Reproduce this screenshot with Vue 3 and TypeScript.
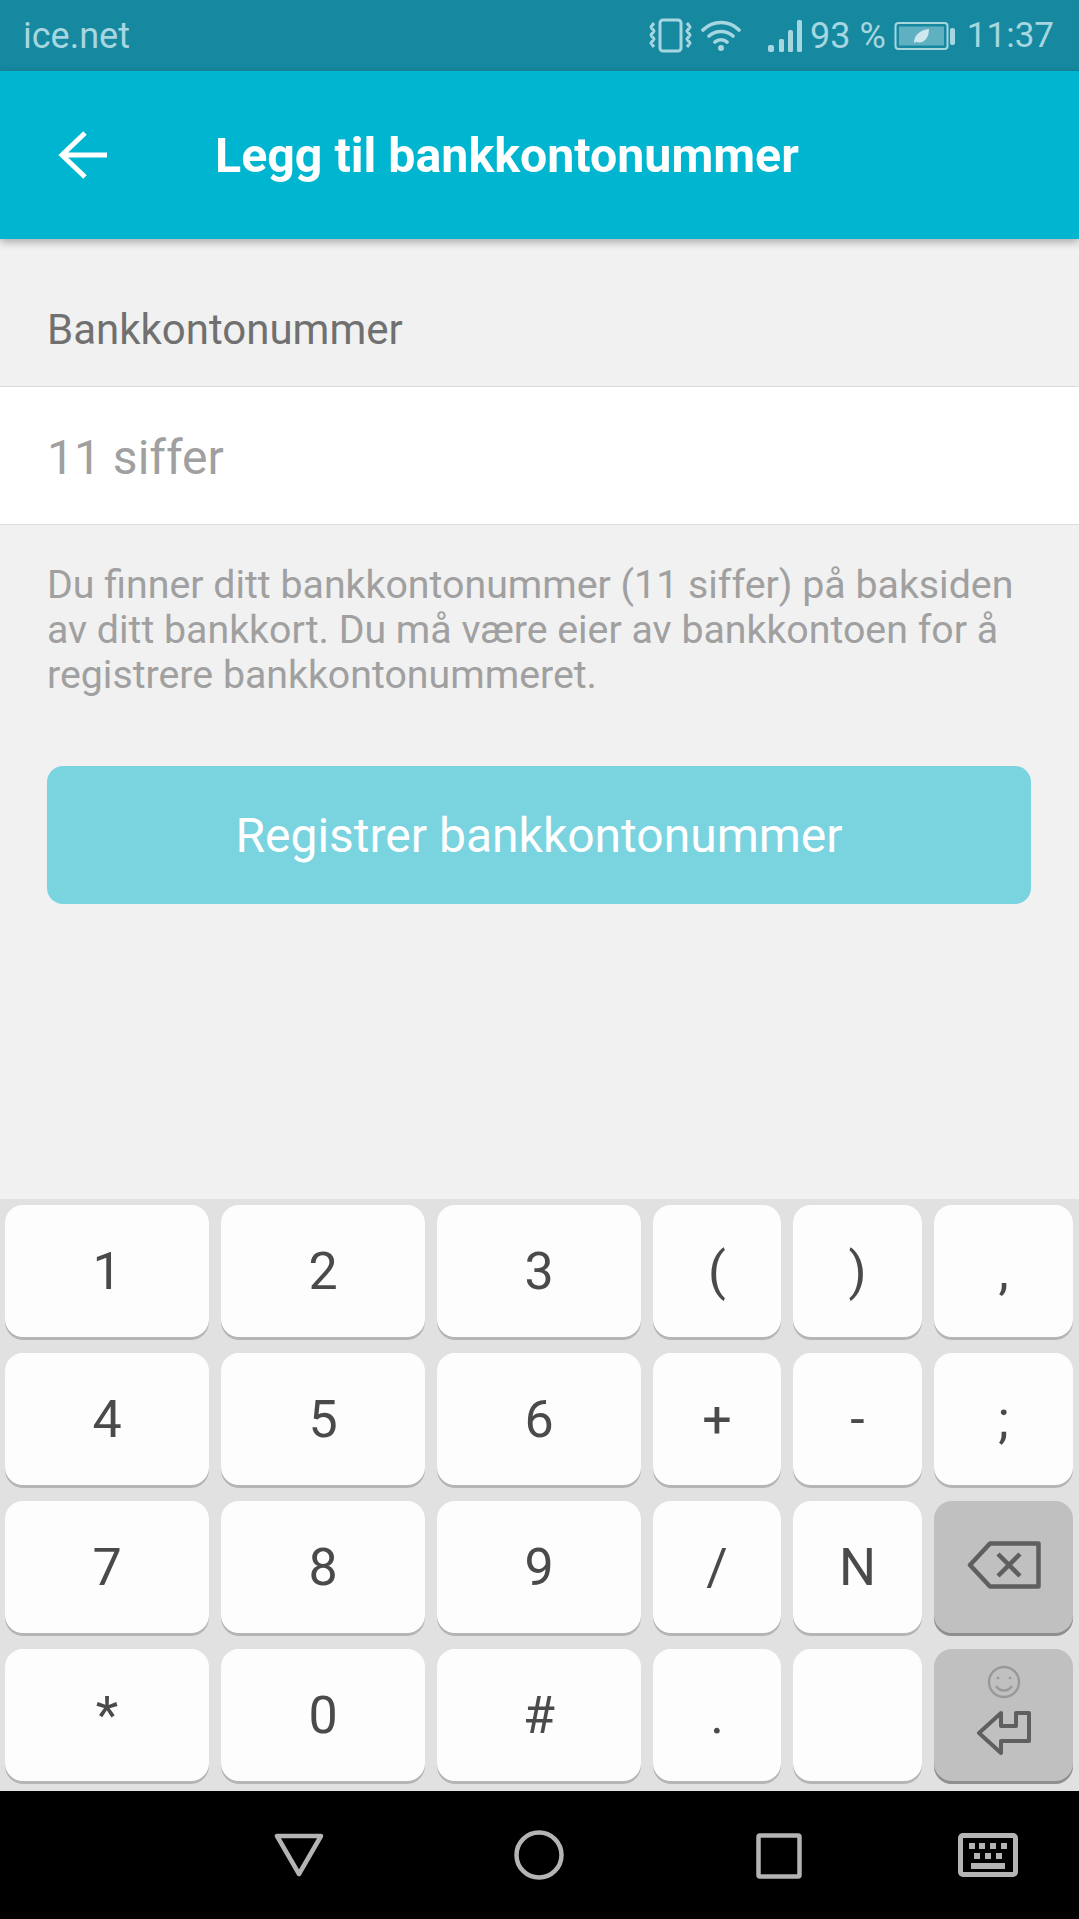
<script setup lang="ts">
interface Key {
  label: string
  kind?: 'backspace' | 'enter'
}

const keys: Key[] = [
  { label: '1' }, { label: '2' }, { label: '3' }, { label: '(' }, { label: ')' }, { label: ',' },
  { label: '4' }, { label: '5' }, { label: '6' }, { label: '+' }, { label: '-' }, { label: ';' },
  { label: '7' }, { label: '8' }, { label: '9' }, { label: '/' }, { label: 'N' }, { label: '', kind: 'backspace' },
  { label: '*' }, { label: '0' }, { label: '#' }, { label: '.' }, { label: '' }, { label: '', kind: 'enter' },
]
</script>

<template>
  <div class="screen">
    <div class="status">
      <span class="carrier">ice.net</span>
      <div class="status-right">
        <svg class="ic-vibrate" width="44" height="36" viewBox="0 0 44 36" fill="none" stroke="#a6d6df" stroke-width="3">
          <rect x="11" y="2" width="21" height="31" rx="3" />
          <path d="M5 5 2 9l3 4-3 4 3 4-3 4 3 4M38 5l3 4-3 4 3 4-3 4 3 4-3 4" stroke-linejoin="round" />
        </svg>
        <svg class="ic-wifi" width="40" height="32" viewBox="0 0 40 32" fill="none" stroke="#a6d6df" stroke-width="3.6" stroke-linecap="round">
          <path d="M2 10C12 0 28 0 38 10M8 16c7-6 17-6 24 0M14 22c3-3 9-3 12 0" />
          <circle cx="20" cy="28" r="3" fill="#a6d6df" stroke="none" />
        </svg>
        <svg class="ic-signal" width="37" height="34" viewBox="0 0 37 34" fill="#a6d6df">
          <rect x="0" y="26" width="6" height="7" rx="2" />
          <rect x="11" y="20" width="5" height="13" rx="1.5" />
          <rect x="20" y="11" width="5" height="22" rx="1.5" />
          <rect x="29" y="1" width="5" height="32" rx="1.5" />
        </svg>
        <span class="pct">93 %</span>
        <svg class="ic-battery" width="62" height="30" viewBox="0 0 62 30">
          <rect x="1.5" y="2" width="52" height="26" rx="3" fill="none" stroke="#a6d6df" stroke-width="2" />
          <rect x="5" y="5.5" width="45" height="19" fill="#5fb0c0" />
          <rect x="56" y="7" width="5" height="17" rx="2" fill="#a6d6df" />
          <path d="M20 22c0-8 6-13 15-14 0 9-5 15-13 13z" fill="#cfe8ed" />
        </svg>
        <span class="clock">11:37</span>
      </div>
    </div>

    <header class="appbar">
      <svg class="back" width="50" height="48" viewBox="0 0 50 48" fill="none" stroke="#fff" stroke-width="5">
        <path d="M49 24H5M27 2 4 24l23 22" />
      </svg>
      <h1 class="title">Legg til bankkontonummer</h1>
    </header>

    <main class="content">
      <div class="label">Bankkontonummer</div>
      <div class="field">11 siffer</div>
      <p class="help">Du finner ditt bankkontonummer (11 siffer) på baksiden av ditt bankkort. Du må være eier av bankkontoen for å registrere bankkontonummeret.</p>
      <button class="submit">Registrer bankkontonummer</button>
    </main>

    <section class="keyboard">
      <div
        v-for="(key, i) in keys"
        :key="i"
        class="key"
        :class="{ grey: key.kind }"
      >
        <template v-if="key.label">{{ key.label }}</template>
        <svg v-if="key.kind === 'backspace'" class="backspace" width="74" height="48" viewBox="0 0 74 48" fill="none" stroke="#5f5f5f" stroke-width="4.5" stroke-linejoin="round">
          <path d="M23 2.5h48.5v43H23L3 24z" />
          <path d="M31 13l22 22M53 13 31 35" />
        </svg>
        <div v-if="key.kind === 'enter'" class="enter">
          <svg width="34" height="34" viewBox="0 0 34 34" fill="none" stroke="#999" stroke-width="2.4">
            <circle cx="17" cy="17" r="15" />
            <path d="M9 21c4 6 12 6 16 0" />
            <circle cx="11" cy="13" r="1" fill="#999" stroke-width="1" />
            <circle cx="23" cy="13" r="1" fill="#999" stroke-width="1" />
          </svg>
          <svg width="56" height="46" viewBox="0 0 56 46" fill="none" stroke="#5f5f5f" stroke-width="4" stroke-linejoin="round">
            <path d="M53 3H40V16H25V3L3 23l22 20V31h28z" />
          </svg>
        </div>
      </div>
    </section>

    <nav class="navbar">
      <svg class="nav-back" width="50" height="44" viewBox="0 0 50 44" fill="none" stroke="#b4b4b4" stroke-width="4.5" stroke-linejoin="round">
        <path d="M3 3h44L25 41z" />
      </svg>
      <svg class="nav-home" width="50" height="50" viewBox="0 0 50 50" fill="none" stroke="#b4b4b4" stroke-width="4.5">
        <circle cx="25" cy="25" r="22.5" />
      </svg>
      <svg class="nav-recent" width="46" height="46" viewBox="0 0 46 46" fill="none" stroke="#b4b4b4" stroke-width="4.5" stroke-linejoin="round">
        <rect x="2.5" y="2.5" width="41" height="41" rx="1.5" />
      </svg>
      <svg class="nav-kbd" width="60" height="44" viewBox="0 0 60 44" fill="#b4b4b4">
        <path fill-rule="evenodd" d="M5 0h50a5 5 0 0 1 5 5v34a5 5 0 0 1-5 5H5a5 5 0 0 1-5-5V5a5 5 0 0 1 5-5zm0 5v34h50V5z" />
        <rect x="11" y="10" width="6" height="6" />
        <rect x="21" y="10" width="6" height="6" />
        <rect x="32" y="10" width="6" height="6" />
        <rect x="43" y="10" width="6" height="6" />
        <rect x="16" y="20" width="6" height="6" />
        <rect x="27" y="20" width="6" height="6" />
        <rect x="38" y="20" width="6" height="6" />
        <rect x="13" y="30" width="34" height="6" />
      </svg>
    </nav>
  </div>
</template>

<style scoped>
.screen {
  width: 1079px;
  height: 1919px;
  display: flex;
  flex-direction: column;
  background: #f1f1f1;
  font-family: Roboto, "Liberation Sans", sans-serif;
  overflow: hidden;
}

.status {
  height: 71px;
  flex: none;
  display: flex;
  align-items: center;
  justify-content: space-between;
  padding: 0 25px 0 23px;
  background: #16889f;
  color: #a6d6df;
  font-size: 36px;
}

.status-right {
  display: flex;
  align-items: center;
}

.ic-wifi {
  margin-left: 8px;
}

.ic-signal {
  margin-left: 27px;
}

.pct {
  margin-left: 5px;
}

.ic-battery {
  margin-left: 8px;
}

.clock {
  margin-left: 11px;
  font-size: 35px;
}

.appbar {
  height: 168px;
  flex: none;
  position: relative;
  display: flex;
  align-items: center;
  padding-left: 58px;
  background: #00b5cf;
  box-shadow: 0 3px 8px rgba(0, 0, 0, 0.3);
}

.title {
  margin: 0 0 0 107px;
  color: #fff;
  font-size: 48.3px;
  font-weight: 700;
}

.content {
  flex: 1;
}

.label {
  height: 147px;
  box-sizing: border-box;
  padding: 33px 47px 0;
  display: flex;
  align-items: center;
  color: #707070;
  font-size: 42px;
}

.field {
  height: 139px;
  padding: 3px 47px 0;
  display: flex;
  align-items: center;
  box-sizing: border-box;
  background: #fff;
  border-top: 1px solid #dcdcdc;
  border-bottom: 1px solid #dcdcdc;
  color: #a0a0a0;
  font-size: 48px;
}

.help {
  margin: 38px 47px 0;
  color: #a0a0a0;
  font-size: 39.3px;
  line-height: 45px;
}

.submit {
  display: block;
  width: 984px;
  height: 138px;
  margin: 68px 47px 0;
  padding: 0;
  border: 0;
  border-radius: 16px;
  background: #7ad4e0;
  color: #fff;
  font-family: inherit;
  font-size: 48px;
}

.keyboard {
  flex: none;
  height: 592px;
  box-sizing: border-box;
  display: grid;
  grid-template-columns: 204px 204px 204px 128px 129px 139px;
  grid-auto-rows: 135px;
  gap: 13px 12px;
  padding: 6px 6px 0 5px;
  background: #e1e1e1;
}

.key {
  display: flex;
  align-items: center;
  justify-content: center;
  box-sizing: border-box;
  padding-bottom: 3px;
  border-radius: 18px;
  background: #fdfdfd;
  box-shadow: inset 0 -3px 0 #b5b5b5;
  color: #4a4a4a;
  font-size: 52px;
}

.key.grey {
  background: #c0c0c0;
  box-shadow: inset 0 -3px 0 #8f8f8f;
}

.enter {
  display: flex;
  flex-direction: column;
  align-items: center;
  gap: 11px;
  margin-bottom: 10px;
}

.backspace {
  margin-bottom: 4px;
}

.navbar {
  height: 128px;
  flex: none;
  position: relative;
  background: #000;
}

.navbar svg {
  position: absolute;
  top: 42px;
}

.nav-back {
  left: 274px;
}

.nav-home {
  left: 514px;
  top: 39px !important;
}

.nav-recent {
  left: 756px;
}

.nav-kbd {
  left: 958px;
}
</style>
